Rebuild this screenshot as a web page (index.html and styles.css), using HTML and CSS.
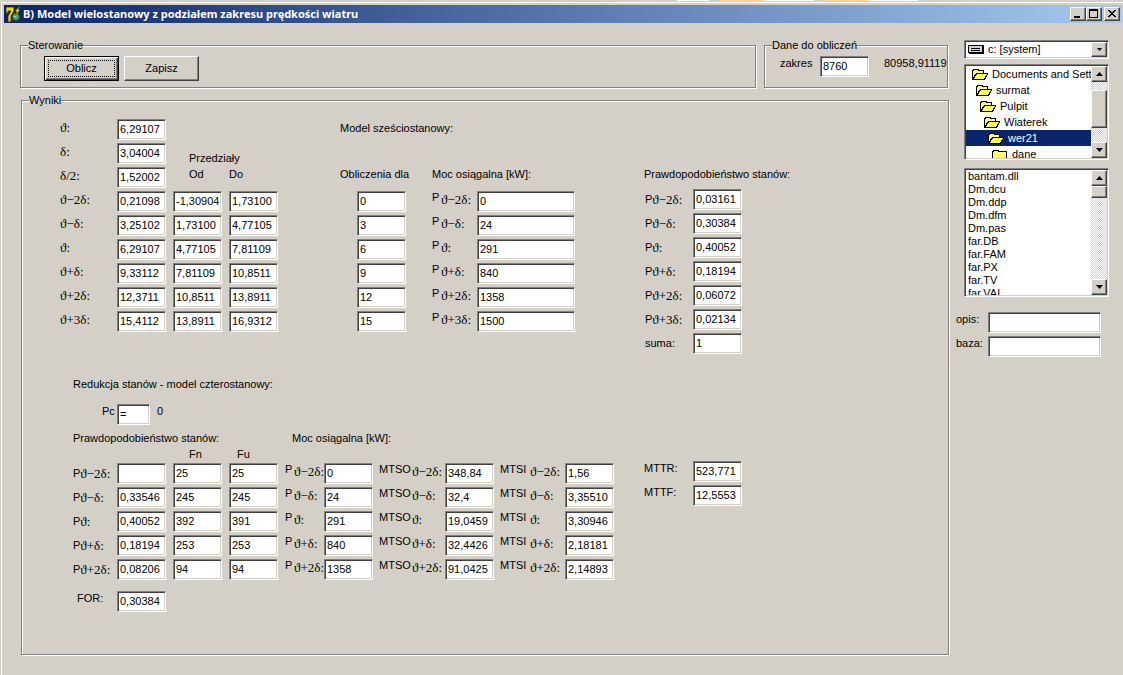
FILE: index.html
```html
<!DOCTYPE html>
<html lang="pl">
<head>
<meta charset="utf-8">
<title>Model wielostanowy z podziałem zakresu prędkości wiatru</title>
<link rel="stylesheet" href="styles.css">
</head>
<body>
<div class="backdrop"></div>
<div class="window">
<header class="titlebar">
  <svg class="app-icon" width="17" height="17" viewBox="0 0 17 17" aria-hidden="true">
    <circle cx="11" cy="11" r="4" fill="#3fa070" stroke="#303830" stroke-width="2"/>
    <circle cx="10" cy="10" r="1.500" fill="#7fe0b0"/>
    <path d="M1 1h8v4L6 10v6H3v-6l3-5H3v2H1z" fill="#e8d820" stroke="#302800" stroke-width=".8"/>
    <path d="M15 0l-5 5h2l-2 5 5-6h-2z" fill="#f8f000" stroke="#505000" stroke-width=".5"/>
  </svg>
  <h1>B) Model wielostanowy z podziałem zakresu prędkości wiatru</h1>
  <div class="caption-buttons">
    <button class="bevel" aria-label="Minimalizuj"><svg width="12" height="10"><path d="M2 7h6v2H2z"/></svg></button>
    <button class="bevel" aria-label="Maksymalizuj"><svg width="12" height="10"><path d="M1 0h9v9H1zM2 2v6h7V2z" fill-rule="evenodd"/></svg></button>
    <button class="bevel close" aria-label="Zamknij"><svg width="12" height="10" shape-rendering="crispEdges"><path d="M2 1h2v1h1v1h2V2h1V1h2v1H9v1H8v1H7v1h1v1h1v1h1v1H8V7H7V6H5v1H4v1H2V7h1V6h1V5h1V4H4V3H3V2H2z"/></svg></button>
  </div>
</header>
<div class="client">
<main>
  <div class="top-row">
    <fieldset class="control">
      <legend>Sterowanie</legend>
      <div class="buttons">
        <button class="push default"><span>Oblicz</span></button>
        <button class="push bevel"><span>Zapisz</span></button>
      </div>
    </fieldset>
    <fieldset class="data">
      <legend>Dane do obliczeń</legend>
      <div class="range">
        <label for="zakres">zakres</label>
        <input id="zakres" class="field" value="8760">
        <output>80958,911197</output>
      </div>
    </fieldset>
  </div>

  <fieldset class="results">
    <legend>Wyniki</legend>
    <div class="upper">
      <div class="grid intervals">
        <label class="sym" for="a1">ϑ:</label><input id="a1" class="field" value="6,29107"><span class="blank"></span>
        <label class="sym" for="a2">δ:</label><input id="a2" class="field" value="3,04004"><span class="wide-head">Przedziały</span>
        <label class="sym" for="a3">δ/2:</label><input id="a3" class="field" value="1,52002"><span class="inset">Od</span><span>Do</span>
        <label class="sym" for="a4">ϑ−2δ:</label><input id="a4" class="field" value="0,21098"><input class="field" aria-label="Od, ϑ−2δ" value="-1,30904"><input class="field" aria-label="Do, ϑ−2δ" value="1,73100">
        <label class="sym" for="a5">ϑ−δ:</label><input id="a5" class="field" value="3,25102"><input class="field" aria-label="Od, ϑ−δ" value="1,73100"><input class="field" aria-label="Do, ϑ−δ" value="4,77105">
        <label class="sym" for="a6">ϑ:</label><input id="a6" class="field" value="6,29107"><input class="field" aria-label="Od, ϑ" value="4,77105"><input class="field" aria-label="Do, ϑ" value="7,81109">
        <label class="sym" for="a7">ϑ+δ:</label><input id="a7" class="field" value="9,33112"><input class="field" aria-label="Od, ϑ+δ" value="7,81109"><input class="field" aria-label="Do, ϑ+δ" value="10,8511">
        <label class="sym" for="a8">ϑ+2δ:</label><input id="a8" class="field" value="12,3711"><input class="field" aria-label="Od, ϑ+2δ" value="10,8511"><input class="field" aria-label="Do, ϑ+2δ" value="13,8911">
        <label class="sym" for="a9">ϑ+3δ:</label><input id="a9" class="field" value="15,4112"><input class="field" aria-label="Od, ϑ+3δ" value="13,8911"><input class="field" aria-label="Do, ϑ+3δ" value="16,9312">
      </div>

      <div class="grid six-state">
        <h2>Model sześciostanowy:</h2>
        <span class="calc-head">Obliczenia dla</span><span class="power-head">Moc osiągalna [kW]:</span>
        <input class="field calc" aria-label="Obliczenia dla 0" value="0"><label for="b1"><span class="up">P</span><span class="sym">ϑ−2δ:</span></label><input id="b1" class="field" value="0">
        <input class="field calc" aria-label="Obliczenia dla 3" value="3"><label for="b2"><span class="up">P</span><span class="sym">ϑ−δ:</span></label><input id="b2" class="field" value="24">
        <input class="field calc" aria-label="Obliczenia dla 6" value="6"><label for="b3"><span class="up">P</span><span class="sym">ϑ:</span></label><input id="b3" class="field" value="291">
        <input class="field calc" aria-label="Obliczenia dla 9" value="9"><label for="b4"><span class="up">P</span><span class="sym">ϑ+δ:</span></label><input id="b4" class="field" value="840">
        <input class="field calc" aria-label="Obliczenia dla 12" value="12"><label for="b5"><span class="up">P</span><span class="sym">ϑ+2δ:</span></label><input id="b5" class="field" value="1358">
        <input class="field calc" aria-label="Obliczenia dla 15" value="15"><label for="b6"><span class="up">P</span><span class="sym">ϑ+3δ:</span></label><input id="b6" class="field" value="1500">
      </div>

      <div class="grid pair probabilities">
        <h2>Prawdopodobieństwo stanów:</h2>
        <label class="low" for="c1"><span>P</span><span class="sym">ϑ−2δ:</span></label><input id="c1" class="field" value="0,03161">
        <label class="low" for="c2"><span>P</span><span class="sym">ϑ−δ:</span></label><input id="c2" class="field" value="0,30384">
        <label class="low" for="c3"><span>P</span><span class="sym">ϑ:</span></label><input id="c3" class="field" value="0,40052">
        <label class="low" for="c4"><span>P</span><span class="sym">ϑ+δ:</span></label><input id="c4" class="field" value="0,18194">
        <label class="low" for="c5"><span>P</span><span class="sym">ϑ+2δ:</span></label><input id="c5" class="field" value="0,06072">
        <label class="low" for="c6"><span>P</span><span class="sym">ϑ+3δ:</span></label><input id="c6" class="field" value="0,02134">
        <label class="low" for="c7"><span>suma:</span></label><input id="c7" class="field" value="1">
      </div>
    </div>

    <div class="lower">
      <h2>Redukcja stanów - model czterostanowy:</h2>
      <div class="pc"><label for="pc">Pc</label><input id="pc" class="field" value="="><output>0</output></div>
      <div class="heads"><h2>Prawdopodobieństwo stanów:</h2><h2>Moc osiągalna [kW]:</h2></div>
      <div class="subheads"><span>Fn</span><span>Fu</span></div>
      <div class="groups">
        <div class="grid reduced">
          <label class="low" for="d1"><span>P</span><span class="sym">ϑ−2δ:</span></label><input id="d1" class="field" value=""><input class="field" aria-label="Fn, ϑ−2δ" value="25"><input class="field" aria-label="Fu, ϑ−2δ" value="25">
          <label class="low" for="d2"><span>P</span><span class="sym">ϑ−δ:</span></label><input id="d2" class="field" value="0,33546"><input class="field" aria-label="Fn, ϑ−δ" value="245"><input class="field" aria-label="Fu, ϑ−δ" value="245">
          <label class="low" for="d3"><span>P</span><span class="sym">ϑ:</span></label><input id="d3" class="field" value="0,40052"><input class="field" aria-label="Fn, ϑ" value="392"><input class="field" aria-label="Fu, ϑ" value="391">
          <label class="low" for="d4"><span>P</span><span class="sym">ϑ+δ:</span></label><input id="d4" class="field" value="0,18194"><input class="field" aria-label="Fn, ϑ+δ" value="253"><input class="field" aria-label="Fu, ϑ+δ" value="253">
          <label class="low" for="d5"><span>P</span><span class="sym">ϑ+2δ:</span></label><input id="d5" class="field" value="0,08206"><input class="field" aria-label="Fn, ϑ+2δ" value="94"><input class="field" aria-label="Fu, ϑ+2δ" value="94">
        </div>
        <div class="grid pair power">
          <label for="e1"><span class="up">P</span><span class="sym">ϑ−2δ:</span></label><input id="e1" class="field" value="0">
          <label for="e2"><span class="up">P</span><span class="sym">ϑ−δ:</span></label><input id="e2" class="field" value="24">
          <label for="e3"><span class="up">P</span><span class="sym">ϑ:</span></label><input id="e3" class="field" value="291">
          <label for="e4"><span class="up">P</span><span class="sym">ϑ+δ:</span></label><input id="e4" class="field" value="840">
          <label for="e5"><span class="up">P</span><span class="sym">ϑ+2δ:</span></label><input id="e5" class="field" value="1358">
        </div>
        <div class="grid pair mtso">
          <label for="f1"><span class="up">MTSO</span><span class="sym">ϑ−2δ:</span></label><input id="f1" class="field" value="348,84">
          <label for="f2"><span class="up">MTSO</span><span class="sym">ϑ−δ:</span></label><input id="f2" class="field" value="32,4">
          <label for="f3"><span class="up">MTSO</span><span class="sym">ϑ:</span></label><input id="f3" class="field" value="19,0459">
          <label for="f4"><span class="up">MTSO</span><span class="sym">ϑ+δ:</span></label><input id="f4" class="field" value="32,4426">
          <label for="f5"><span class="up">MTSO</span><span class="sym">ϑ+2δ:</span></label><input id="f5" class="field" value="91,0425">
        </div>
        <div class="grid pair mtsi">
          <label for="g1"><span class="up">MTSI</span><span class="sym">ϑ−2δ:</span></label><input id="g1" class="field" value="1,56">
          <label for="g2"><span class="up">MTSI</span><span class="sym">ϑ−δ:</span></label><input id="g2" class="field" value="3,35510">
          <label for="g3"><span class="up">MTSI</span><span class="sym">ϑ:</span></label><input id="g3" class="field" value="3,30946">
          <label for="g4"><span class="up">MTSI</span><span class="sym">ϑ+δ:</span></label><input id="g4" class="field" value="2,18181">
          <label for="g5"><span class="up">MTSI</span><span class="sym">ϑ+2δ:</span></label><input id="g5" class="field" value="2,14893">
        </div>
        <div class="grid pair totals">
          <label for="h1">MTTR:</label><input id="h1" class="field" value="523,771">
          <label for="h2">MTTF:</label><input id="h2" class="field" value="12,5553">
        </div>
      </div>
      <div class="for-row"><label for="for">FOR:</label><input id="for" class="field" value="0,30384"></div>
    </div>
  </fieldset>
</main>

<aside>
  <svg width="0" height="0" class="defs" aria-hidden="true">
    <defs>
      <g id="open-folder" shape-rendering="crispEdges">
        <path d="M0 12V2l1-1h5l1 1h5v3h4v1l-3 6z"/>
        <path d="M1 9V3l1-1h3l1 1h5v2H4L1 10z" fill="#ffff78"/>
        <path d="M2 11l3-5h10l-3 5z" fill="#ffff50"/>
      </g>
      <g id="closed-folder" shape-rendering="crispEdges">
        <path d="M0 13V3l1-1h5l1 1h7l1 1v9z"/>
        <path d="M1 13V4l1-1h3l1 1h8v9z" fill="#ffff64"/>
      </g>
    </defs>
  </svg>
  <div class="drive sunken">
    <svg width="16" height="9" aria-hidden="true" shape-rendering="crispEdges"><path d="M0 0h15l1 1v8H1L0 8z"/><path d="M1 1h13v6H1z" fill="#d0d0d0"/><path d="M3 3h9v1H3zM3 5h9v1H3z"/></svg>
    <select aria-label="Dysk"><option>c: [system]</option></select>
    <span class="drop bevel"><svg width="7" height="4"><path d="M1 0h5L3.500 3z"/></svg></span>
  </div>

  <div class="list folders sunken">
    <ul>
      <li class="l0"><svg width="16" height="13"><use href="#open-folder"/></svg>Documents and Settings</li>
      <li class="l1"><svg width="16" height="13"><use href="#open-folder"/></svg>surmat</li>
      <li class="l2"><svg width="16" height="13"><use href="#open-folder"/></svg>Pulpit</li>
      <li class="l3"><svg width="16" height="13"><use href="#open-folder"/></svg>Wiaterek</li>
      <li class="l4 selected"><svg width="16" height="13"><use href="#open-folder"/></svg>wer21</li>
      <li class="l5"><svg width="16" height="13"><use href="#closed-folder"/></svg>dane</li>
    </ul>
    <div class="scrollbar">
      <button class="bevel" aria-label="W górę"><svg width="7" height="4"><path d="M0 4h7L3.500 0z"/></svg></button>
      <div class="track"><div class="thumb bevel"></div></div>
      <button class="bevel" aria-label="W dół"><svg width="7" height="4"><path d="M0 0h7L3.500 4z"/></svg></button>
    </div>
  </div>

  <div class="list files sunken">
    <ul>
      <li>bantam.dll</li><li>Dm.dcu</li><li>Dm.ddp</li><li>Dm.dfm</li><li>Dm.pas</li><li>far.DB</li><li>far.FAM</li><li>far.PX</li><li>far.TV</li><li>far.VAL</li>
    </ul>
    <div class="scrollbar">
      <button class="bevel" aria-label="W górę"><svg width="7" height="4"><path d="M0 4h7L3.500 0z"/></svg></button>
      <div class="track"><div class="thumb bevel"></div></div>
      <button class="bevel" aria-label="W dół"><svg width="7" height="4"><path d="M0 0h7L3.500 4z"/></svg></button>
    </div>
  </div>

  <div class="base">
    <label for="opis">opis:</label><input id="opis" class="field" value="">
    <label for="baza">baza:</label><input id="baza" class="field" value="">
  </div>
</aside>
</div>
</div>
</body>
</html>
```

FILE: styles.css
```css
* { box-sizing: border-box; }

body {
  margin: 0;
  background: #d4d0c8;
  color: #000;
  font: 11px/15px "Liberation Sans", Arial, sans-serif;
}

button, input, select { font: inherit; color: inherit; }
h1, h2 { margin: 0; font: inherit; white-space: nowrap; }

/* Sliver of the window behind this one */
.backdrop {
  height: 1px;
  background: linear-gradient(90deg, transparent 677px, #fff 677px 709px, transparent 709px 720px, #ffd3a0 720px 762px, #fff 766px 814px, transparent 814px 825px, #ffd3a0 825px 868px, #fff 870px 918px, transparent 918px);
}

.window {
  min-height: calc(100vh - 2px);
  margin: 1px 0 0 1px;
  border: solid #fff;
  border-width: 1px 0 0 1px;
}

/* Title bar */
.titlebar {
  display: flex;
  align-items: center;
  height: 18px;
  margin: 2px 1px 0 2px;
  padding: 0 2px 0 1px;
  background: linear-gradient(90deg, #0a246a, #a6caf0);
}
.app-icon { margin-right: 1px; }
h1 {
  flex: 1;
  color: #fff;
  font: bold 11px/16px "Noto Sans", Tahoma, sans-serif;
}
.caption-buttons { display: flex; }
.caption-buttons button { width: 16px; height: 14px; }
.caption-buttons .close { margin-left: 2px; }

.bevel {
  display: grid;
  place-content: center;
  padding: 0;
  background: #d4d0c8;
  border: 1px solid;
  border-color: #fff #404040 #404040 #fff;
  box-shadow: inset -1px -1px #808080;
}
.bevel svg { display: block; }

/* Client area */
.client {
  display: flex;
  align-items: flex-start;
  gap: 7px;
  padding: 16px 14px 0 18px;
}
main { flex: 1; }

fieldset {
  min-width: 0;
  margin: 0;
  padding: 0 7px;
  border: 1px solid #808080;
  box-shadow: 1px 1px #fff, inset 1px 1px #fff;
}
legend {
  padding: 0;
  background: #d4d0c8;
  line-height: 13px;
}

.top-row { display: flex; gap: 8px; padding-right: 1px; }
.control { flex: 1; }
.data { width: 184px; padding-right: 0; }
.buttons { display: flex; gap: 5px; padding: 4px 16px 6px; }

.push { width: 75px; height: 25px; padding: 0; }
.push.default {
  background: #d4d0c8;
  border: 1px solid #000;
  box-shadow: inset 1px 1px #fff, inset -1px -1px #404040, inset -2px -2px #808080;
}
.default span {
  display: block;
  margin: 3px;
  border: 1px dotted #000;
}

.range { display: flex; padding: 4px 0 0 8px; }
.range label { width: 40px; }
.range output { flex: 1; margin-left: 15px; overflow: hidden; white-space: nowrap; }

.field {
  width: 49px;
  height: 21px;
  padding: 0 2px 2px;
  background: #fff;
  border: 1px solid;
  border-color: #808080 #fff #fff #808080;
  border-radius: 0;
  box-shadow: inset 1px 1px #404040, inset -1px -1px #d4d0c8;
  outline: 0;
}

/* Results */
.results {
  margin: 6px 0 0 1px;
  padding: 0 0 42px;
}
.results > legend { margin-left: 7px; }

.upper {
  display: grid;
  grid-template-columns: 280px 304px auto;
  align-items: start;
  padding: 12px 0 0 38px;
}

.grid {
  display: grid;
  grid-auto-rows: 21px;
  justify-content: start;
  row-gap: 3px;
}
.grid label { display: flex; white-space: nowrap; }
.sym {
  font-family: "Liberation Serif", "DejaVu Serif", serif;
  font-size: 13px;
  line-height: 18px;
}
.up { width: 9px; line-height: 12px; }
.low { padding-left: 1px; line-height: 20px; }
.low .sym { line-height: 22px; }

.intervals {
  grid-template-columns: 50px repeat(3, 49px);
  column-gap: 7px;
}
.blank, .wide-head { grid-column: span 2; }
.wide-head { align-self: end; line-height: 12px; }
.wide-head, .inset { padding-left: 16px; }

.six-state { grid-template-columns: 92px 45px 98px; }
.six-state h2 { grid-column: span 3; grid-row: 1 / 3; line-height: 18px; }
.calc-head { grid-row: 3; }
.power-head { grid-row: 3; grid-column: span 2; }
.six-state .calc { margin-left: 17px; }
.six-state label + .field { width: 98px; }

.probabilities { grid-template-columns: 49px 49px; padding-top: 46px; }
.probabilities h2 { grid-column: span 2; line-height: 18px; }

.lower { padding: 23px 0 0 51px; }
.pc { display: flex; padding: 12px 0 0 29px; }
.pc label { width: 15px; }
.pc .field { width: 33px; }
.pc output { margin-left: 7px; }
.heads { display: grid; grid-template-columns: 219px auto; padding-top: 6px; }
.subheads { display: flex; padding: 1px 0 1px 116px; }
.subheads span { width: 48px; }

.groups { display: flex; align-items: flex-start; gap: 6px; }
.reduced { grid-template-columns: 37px repeat(3, 49px); column-gap: 7px; }
.reduced .low { padding-left: 0; }
.power { grid-template-columns: 40px 49px; }
.power label { padding-left: 1px; }
.mtso { grid-template-columns: 66px 49px; }
.mtso .up { width: 33px; }
.mtsi { grid-template-columns: 65px 49px; }
.mtsi .up { width: 30px; }
.totals { grid-template-columns: 49px 49px; margin: -2px 0 0 24px; }
.for-row { display: flex; padding: 11px 0 0 4px; }
.for-row label { width: 40px; }

/* Drive, folder and file pickers */
aside { width: 153px; padding-top: 1px; }
.defs { position: absolute; }
.sunken {
  display: flex;
  margin-left: 8px;
  background: #fff;
  border: 1px solid;
  border-color: #808080 #fff #fff #808080;
  box-shadow: inset 1px 1px #404040, inset -1px -1px #d4d0c8;
  padding: 1px;
}
.drive { align-items: center; height: 19px; padding-left: 3px; }
.drive select {
  flex: 1;
  min-width: 0;
  padding: 0 0 0 4px;
  appearance: none;
  background: none;
  border: 0;
  outline: 0;
}
.drop { width: 16px; height: 15px; }

.list { margin-top: 5px; }
.folders { height: 96px; }
.files { height: 129px; margin-top: 8px; }
.list ul {
  flex: 1;
  margin: 0;
  padding: 0;
  overflow: hidden;
  list-style: none;
  white-space: nowrap;
}
.folders li { display: flex; align-items: center; gap: 4px; height: 16px; line-height: 14px; }
.folders svg { flex: none; }
.files li { padding-left: 2px; line-height: 13px; }
.l0 { padding-left: 6px; }
.l1 { padding-left: 10px; }
.l2 { padding-left: 14px; }
.l3 { padding-left: 18px; }
.l4 { padding-left: 22px; }
.l5 { padding-left: 26px; }
.selected { background: #0a246a; color: #fff; }

.scrollbar { display: flex; flex-direction: column; width: 16px; }
.scrollbar button { height: 16px; }
.track {
  flex: 1;
  background: repeating-conic-gradient(#fff 0 25%, #d4d0c8 0 50%) 0 0 / 2px 2px;
}
.thumb { height: 12px; }
.folders .thumb { height: 38px; margin-top: 8px; }

.base {
  display: grid;
  grid-template-columns: 32px 1fr;
  gap: 3px 0;
  padding: 15px 8px 0 0;
}
.base .field { width: 100%; }
```
